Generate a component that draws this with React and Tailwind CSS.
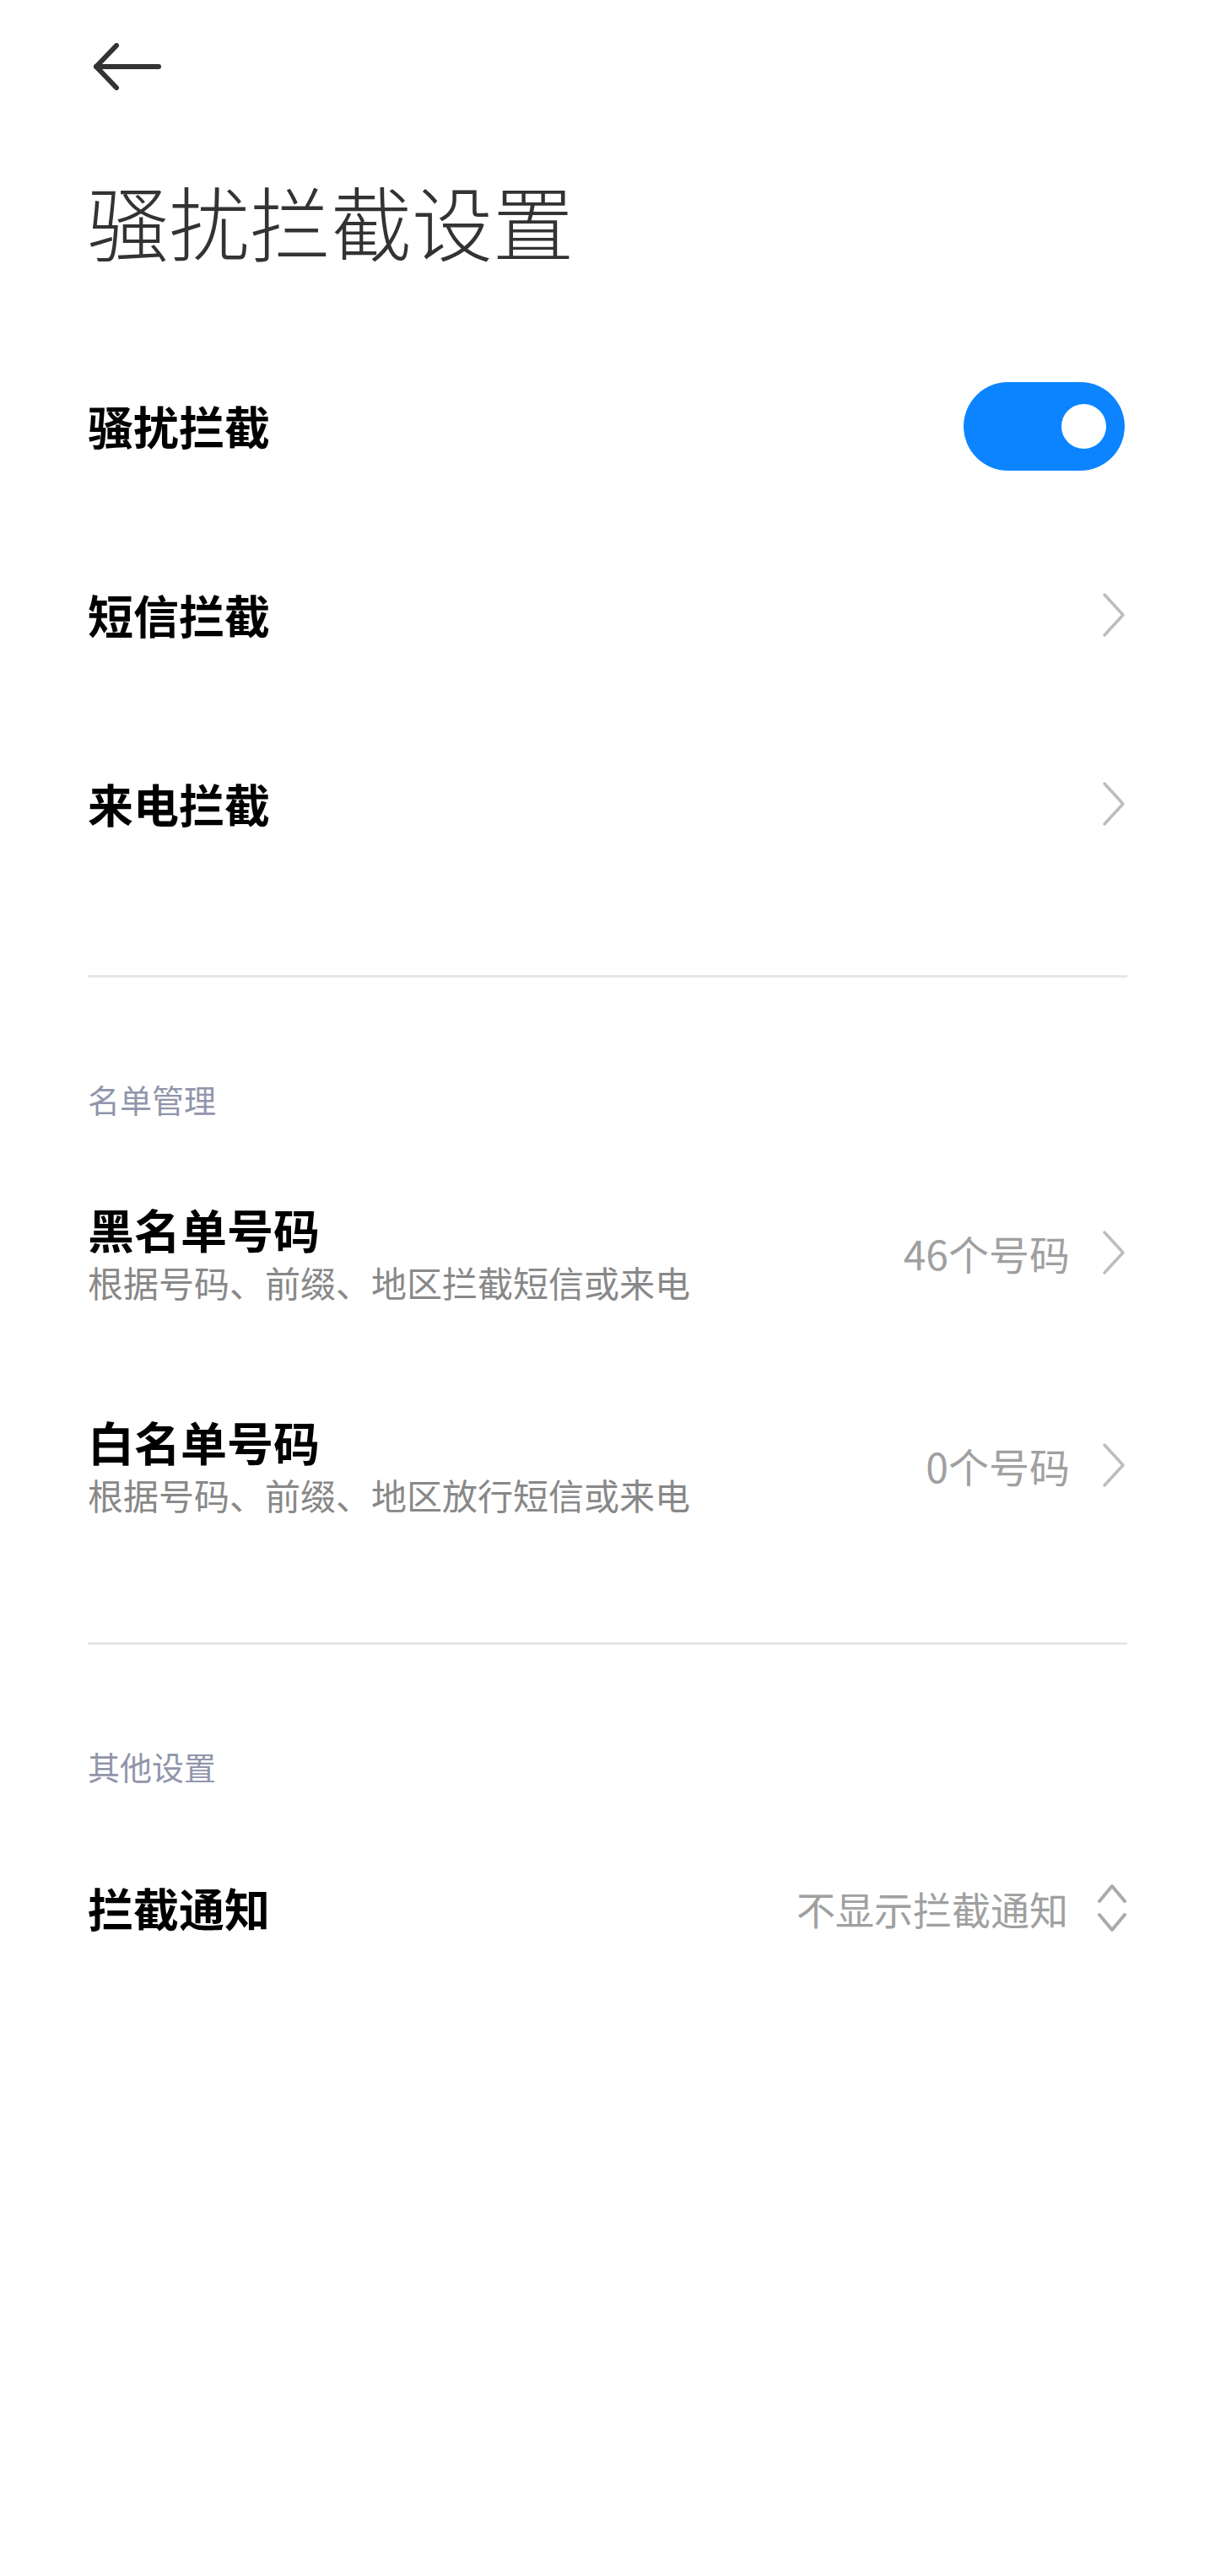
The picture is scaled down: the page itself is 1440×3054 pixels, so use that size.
import React, { useState } from "react";

const font = { fontFamily: '"Noto Sans CJK SC", "Noto Sans", sans-serif' };

const Chevron = () => (
  <svg width="28" height="54" viewBox="0 0 28 54" fill="none" className="mr-[2px] shrink-0">
    <polyline points="3,3 25,27 3,51" stroke="#bdbdbd" strokeWidth="3.5" strokeLinecap="round" strokeLinejoin="round" />
  </svg>
);

const UpDown = () => (
  <svg width="36" height="58" viewBox="0 0 36 58" fill="none" className="shrink-0">
    <polyline points="3,21 18,3 33,21" stroke="#ababab" strokeWidth="4" strokeLinecap="round" strokeLinejoin="round" />
    <polyline points="3,37 18,55 33,37" stroke="#ababab" strokeWidth="4" strokeLinecap="round" strokeLinejoin="round" />
  </svg>
);

const Toggle = ({ on, onChange }) => (
  <button
    onClick={() => onChange(!on)}
    className={`relative mr-[3px] h-[105px] w-[191px] shrink-0 rounded-full ${on ? "bg-[#0d84ff]" : "bg-[#e6e6e6]"}`}
  >
    <span
      className={`absolute top-[26px] h-[53px] w-[53px] rounded-full bg-white ${on ? "right-[22px]" : "left-[22px]"}`}
    />
  </button>
);

const SimpleRow = ({ title, right }) => (
  <div className="flex h-[224px] items-center justify-between">
    <span className="text-[54px] font-bold leading-none text-black">{title}</span>
    {right}
  </div>
);

const ListRow = ({ title, sub, value }) => (
  <div className="flex h-[252px] items-center justify-between">
    <div className="flex flex-col">
      <span className="text-[55px] font-bold leading-[70px] text-black">{title}</span>
      <span className="text-[42px] leading-[58px] text-[#888888]">{sub}</span>
    </div>
    <div className="flex items-center gap-[38px]">
      <span className="text-[48px] leading-none text-[#a0a0a0]">{value}</span>
      <Chevron />
    </div>
  </div>
);

const SectionHeader = ({ children }) => (
  <div className="pt-[124px] pb-[36px]">
    <span className="block text-[38px] leading-[40px] text-[#9195aa]">{children}</span>
  </div>
);

export default function App() {
  const [blocking, setBlocking] = useState(true);

  return (
    <div className="min-h-[3054px] bg-white px-[104px]" style={font}>
      {/* header */}
      <div className="flex h-[158px] items-center">
        <svg width="82" height="56" viewBox="0 0 82 56" fill="none" className="ml-[5px]">
          <polyline points="29,3 5,28 29,53" stroke="#333333" strokeWidth="6" strokeLinecap="round" strokeLinejoin="round" />
          <line x1="5" y1="28" x2="79" y2="28" stroke="#333333" strokeWidth="6" strokeLinecap="round" />
        </svg>
      </div>

      <div className="flex h-[206px] items-center">
        <h1 className="text-[96px] font-light leading-none text-[#333333]">骚扰拦截设置</h1>
      </div>

      <div className="mt-[29px]">
        <SimpleRow title="骚扰拦截" right={<Toggle on={blocking} onChange={setBlocking} />} />
        <SimpleRow title="短信拦截" right={<Chevron />} />
        <SimpleRow title="来电拦截" right={<Chevron />} />
      </div>

      <div className="mt-[91px] h-[3px] bg-[#e6e6e6]" />

      <SectionHeader>名单管理</SectionHeader>
      <ListRow title="黑名单号码" sub="根据号码、前缀、地区拦截短信或来电" value="46个号码" />
      <ListRow title="白名单号码" sub="根据号码、前缀、地区放行短信或来电" value="0个号码" />

      <div className="mt-[84px] h-[3px] bg-[#e6e6e6]" />

      <SectionHeader>其他设置</SectionHeader>
      <div className="flex h-[224px] items-center justify-between">
        <span className="text-[54px] font-bold leading-none text-black">拦截通知</span>
        <div className="flex items-center gap-[34px]">
          <span className="text-[46px] leading-none text-[#a0a0a0]">不显示拦截通知</span>
          <UpDown />
        </div>
      </div>
    </div>
  );
}
